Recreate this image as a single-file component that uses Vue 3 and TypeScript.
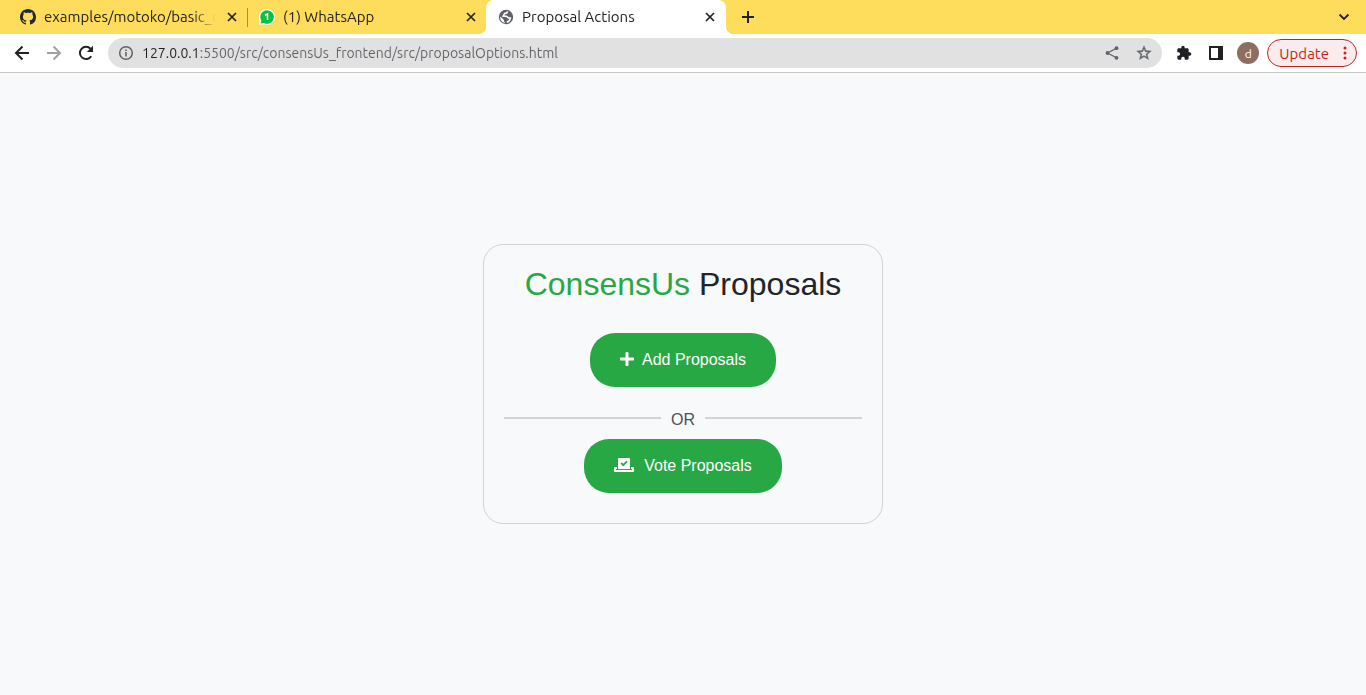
<script setup lang="ts">
import { ref } from 'vue'

interface Tab {
  id: number
  title: string
  icon: 'github' | 'whatsapp' | 'globe'
}

const tabs: Tab[] = [
  { id: 1, title: 'examples/motoko/basic_dao', icon: 'github' },
  { id: 2, title: '(1) WhatsApp', icon: 'whatsapp' },
  { id: 3, title: 'Proposal Actions', icon: 'globe' },
]
const activeTab = ref(3)
const address = ref('127.0.0.1:5500/src/consensUs_frontend/src/proposalOptions.html')
</script>

<template>
  <div class="browser">
    <header class="chrome">
      <div class="tab-strip">
        <div v-for="tab in tabs" :key="tab.id" class="tab" :class="{ active: tab.id === activeTab }">
          <button type="button" class="tab-select" @click="activeTab = tab.id">
            <svg v-if="tab.icon === 'github'" class="favicon" viewBox="0 0 16 16" fill="#24292f" aria-hidden="true">
              <path d="M8 0C3.58 0 0 3.58 0 8c0 3.54 2.29 6.53 5.47 7.59.4.07.55-.17.55-.38 0-.19-.01-.82-.01-1.49-2.01.37-2.53-.49-2.69-.94-.09-.23-.48-.94-.82-1.13-.28-.15-.68-.52-.01-.53.63-.01 1.08.58 1.23.82.72 1.21 1.87.87 2.33.66.07-.52.28-.87.51-1.07-1.78-.2-3.64-.89-3.64-3.95 0-.87.31-1.59.82-2.15-.08-.2-.36-1.02.08-2.12 0 0 .67-.21 2.2.82.64-.18 1.32-.27 2-.27s1.36.09 2 .27c1.53-1.04 2.2-.82 2.2-.82.44 1.1.16 1.92.08 2.12.51.56.82 1.27.82 2.15 0 3.07-1.87 3.75-3.65 3.95.29.25.54.73.54 1.48 0 1.07-.01 1.93-.01 2.2 0 .21.15.46.55.38A8.01 8.01 0 0 0 16 8c0-4.42-3.58-8-8-8z" />
            </svg>
            <svg v-else-if="tab.icon === 'whatsapp'" class="favicon" viewBox="0 0 16 16" aria-hidden="true">
              <path d="M8 0a8 8 0 0 1 0 16c-1.3 0-2.500-.3-3.600-.8L0 16l.8-4.300A8 8 0 0 1 8 0z" fill="#fff" />
              <path d="M8 1.200a6.800 6.800 0 1 1-3.300 12.700l-3.200.6.700-3.100A6.800 6.800 0 0 1 8 1.200z" fill="#0bc143" />
              <path d="M6 6.300 8.500 4.800V11" fill="none" stroke="#fff" stroke-width="1.500" />
            </svg>
            <svg v-else class="favicon" viewBox="0 0 16 16" aria-hidden="true">
              <circle cx="8" cy="8" r="7.200" fill="#5f6368" />
              <path d="M9.600 2.300C9.300 4 8 4.400 6.600 4.600 6.300 5.800 5.300 6 5.200 7.200h3.300c1 .2.900 1.500 2 1.700l1.900.1c-.2 2-1.400 3.700-3.600 4.300" fill="none" stroke="#fff" stroke-width="1.600" />
              <path d="M2.200 7.400 5.800 10.800v1.300l1.500 1.800C4 13.600 1.800 10.600 2.200 7.400z" fill="#fff" />
            </svg>
            <span class="tab-title">{{ tab.title }}</span>
          </button>
          <button type="button" class="tab-close" :aria-label="`Close ${tab.title}`">
            <svg viewBox="0 0 16 16" aria-hidden="true"><path d="m4 4 8 8M12 4l-8 8" /></svg>
          </button>
        </div>
        <button type="button" class="new-tab" aria-label="New tab">
          <svg viewBox="0 0 16 16" aria-hidden="true"><path d="M8 2v12M2 8h12" /></svg>
        </button>
        <button type="button" class="tab-search" aria-label="Search tabs">
          <svg viewBox="0 0 16 16" aria-hidden="true"><path d="m3.500 5.500 4.500 4.500 4.500-4.500" /></svg>
        </button>
      </div>

      <div class="toolbar">
        <button type="button" class="tool" aria-label="Back">
          <svg viewBox="0 0 20 20" class="line"><path d="M17 10H4M10.500 3.500 4 10l6.500 6.500" /></svg>
        </button>
        <button type="button" class="tool muted" aria-label="Forward">
          <svg viewBox="0 0 20 20" class="line"><path d="M3 10h13M9.500 3.500 16 10l-6.500 6.500" /></svg>
        </button>
        <button type="button" class="tool" aria-label="Reload">
          <svg viewBox="0 0 20 20"><path class="arc" d="M15.200 13.200A6.100 6.100 0 1 1 14.500 5.800" /><path d="M17 2.800V9h-6.200z" fill="currentColor" /></svg>
        </button>
        <div class="omnibox">
          <svg class="info" viewBox="0 0 16 16" aria-hidden="true">
            <circle cx="8" cy="8" r="6.300" fill="none" stroke="#5f6368" stroke-width="1.500" />
            <path d="M8 7v4.500M8 4.500V6" stroke="#5f6368" stroke-width="1.600" />
          </svg>
          <input v-model="address" class="address" type="text" aria-label="Address" spellcheck="false" />
          <button type="button" class="inner" aria-label="Share">
            <svg viewBox="0 0 16 16"><path d="M12.500 3.200 3.500 8l9 4.800" fill="none" stroke="#5f6368" stroke-width="1.300" /><circle cx="12.500" cy="3.200" r="1.900" /><circle cx="3.500" cy="8" r="1.900" /><circle cx="12.500" cy="12.800" r="1.900" /></svg>
          </button>
          <button type="button" class="inner" aria-label="Bookmark this page">
            <svg viewBox="1 1 22 22"><path stroke="#5f6368" stroke-width=".5" d="m22 9.240-7.190-.62L12 2 9.190 8.630 2 9.240l5.460 4.730L5.820 21 12 17.270 18.180 21l-1.630-7.030L22 9.240zM12 15.400l-3.760 2.270 1-4.280-3.320-2.880 4.380-.38L12 6.100l1.710 4.040 4.380.38-3.320 2.880 1 4.280L12 15.400z" /></svg>
          </button>
        </div>
        <div class="actions">
          <button type="button" class="action" aria-label="Extensions">
            <svg viewBox="0 0 24 24"><path d="M20.500 11H19V7c0-1.100-.9-2-2-2h-4V3.500a2.500 2.500 0 0 0-5 0V5H4c-1.100 0-1.990.9-1.990 2v3.800H3.500a2.700 2.700 0 0 1 0 5.400H2V20c0 1.100.9 2 2 2h3.800v-1.500a2.700 2.700 0 0 1 5.400 0V22H17c1.100 0 2-.9 2-2v-4h1.500a2.500 2.500 0 0 0 0-5z" fill="currentColor" /></svg>
          </button>
          <button type="button" class="action" aria-label="Side panel">
            <svg viewBox="0 0 16 16"><path d="M1 1h14v14H1zM3 3v10h7V3z" fill="currentColor" fill-rule="evenodd" /></svg>
          </button>
          <button type="button" class="avatar" aria-label="Profile">d</button>
          <button type="button" class="update">
            Update
            <svg viewBox="0 0 4 16" aria-hidden="true"><circle cx="2" cy="3" r="1.500" /><circle cx="2" cy="8" r="1.500" /><circle cx="2" cy="13" r="1.500" /></svg>
          </button>
        </div>
      </div>
    </header>

    <main class="page">
      <section class="card">
        <h1 class="title"><span class="brand">ConsensUs</span> Proposals</h1>
        <button type="button" class="choice">
          <svg class="plus" viewBox="0 0 448 512" aria-hidden="true"><path d="M416 208H272V64c0-17.670-14.330-32-32-32h-32c-17.670 0-32 14.330-32 32v144H32c-17.670 0-32 14.330-32 32v32c0 17.670 14.330 32 32 32h144v144c0 17.670 14.330 32 32 32h32c17.670 0 32-14.330 32-32V304h144c17.670 0 32-14.330 32-32v-32c0-17.670-14.330-32-32-32z" /></svg>
          Add Proposals
        </button>
        <div class="divider"><span>OR</span></div>
        <button type="button" class="choice">
          <svg class="vote" viewBox="0 0 640 512" aria-hidden="true"><path d="M608 320h-64v64h22.400c5.300 0 9.600 3.600 9.600 8v16c0 4.400-4.300 8-9.600 8H73.600c-5.300 0-9.600-3.600-9.600-8v-16c0-4.400 4.300-8 9.600-8H96v-64H32c-17.700 0-32 14.300-32 32v96c0 17.700 14.300 32 32 32h576c17.700 0 32-14.300 32-32v-96c0-17.700-14.300-32-32-32zm-96 64V64.300c0-17.900-14.500-32.300-32.300-32.300H160.400C142.500 32 128 46.500 128 64.300V384h384zM211.200 202l25.500-25.300c4.200-4.200 11-4.200 15.200.1l41.300 41.600 95.200-94.400c4.200-4.200 11-4.200 15.200.1l25.300 25.500c4.200 4.200 4.200 11-.1 15.200L300.500 292c-4.200 4.200-11 4.200-15.200-.1l-74.100-74.700c-4.300-4.200-4.200-11 0-15.200z" /></svg>
          Vote Proposals
        </button>
      </section>
    </main>
  </div>
</template>

<style>
body {
  margin: 0;
}
</style>

<style scoped>
* {
  box-sizing: border-box;
}

button {
  display: flex;
  align-items: center;
  justify-content: center;
  margin: 0;
  padding: 0;
  border: 0;
  background: none;
  color: inherit;
  font: inherit;
  cursor: pointer;
}

svg {
  display: block;
  flex: none;
}

.browser {
  display: flex;
  flex-direction: column;
  min-height: 100vh;
  background: #f8f9fa;
}

.chrome {
  border-bottom: 1px solid #c8c8c8;
  background: #fff;
  color: #202124;
  font-family: Ubuntu, "Noto Sans", sans-serif;
  font-size: 15px;
}

.tab-strip {
  display: flex;
  height: 34px;
  padding-left: 8px;
  background: #ffdd5c;
}

.tab {
  position: relative;
  display: flex;
  align-items: center;
  flex: 0 1 239px;
  min-width: 0;
  padding: 0 7px 0 12px;
}

.tab:first-child::after {
  content: "";
  position: absolute;
  top: 8px;
  right: -1px;
  width: 1px;
  height: 19px;
  background: #a58f3b;
}

.tab.active {
  flex-basis: 240px;
  padding-right: 8px;
  border-radius: 8px 8px 0 0;
  background: #fff;
}

.tab.active::before,
.tab.active::after {
  content: "";
  position: absolute;
  bottom: 0;
  width: 8px;
  height: 8px;
}

.tab.active::before {
  right: 100%;
  background: radial-gradient(circle at 0 0, transparent 8px, #fff 8px);
}

.tab.active::after {
  left: 100%;
  background: radial-gradient(circle at 100% 0, transparent 8px, #fff 8px);
}

.tab-select {
  flex: 1;
  min-width: 0;
  height: 100%;
  gap: 8px;
}

.favicon {
  width: 16px;
  height: 16px;
}

.tab-title {
  flex: 1;
  overflow: hidden;
  line-height: 20px;
  text-align: left;
  white-space: nowrap;
  mask-image: linear-gradient(to left, transparent, #000 24px);
}

.tab-close svg {
  width: 16px;
  height: 16px;
  margin-left: 8px;
  stroke: #202124;
  stroke-width: 1.7;
}

.new-tab {
  width: 28px;
  margin-left: 8px;
}

.new-tab svg {
  width: 16px;
  height: 16px;
  stroke: #202124;
  stroke-width: 2;
}

.tab-search {
  width: 28px;
  margin: 0 8px 0 auto;
}

.tab-search svg {
  width: 16px;
  height: 16px;
  fill: none;
  stroke: #202124;
  stroke-width: 1.8;
}

.toolbar {
  display: flex;
  align-items: center;
  height: 38px;
  padding: 0 9px 0 6px;
}

.tool {
  width: 32px;
  height: 28px;
}

.tool svg {
  width: 20px;
  height: 20px;
}

.line,
.arc {
  fill: none;
  stroke: currentColor;
  stroke-width: 2;
}

.muted {
  color: #a0a1a3;
}

.omnibox {
  display: flex;
  align-items: center;
  flex: 1;
  min-width: 0;
  height: 30px;
  margin-left: 6px;
  padding: 0 10px;
  border-radius: 15px;
  background: #e1e1e1;
}

.info {
  width: 16px;
  height: 16px;
}

.address {
  flex: 1;
  min-width: 0;
  height: 24px;
  margin-left: 8px;
  padding: 0;
  border: 0;
  outline: 0;
  background: linear-gradient(to right, #202124 57px, #5f6368 57px);
  background-clip: text;
  color: transparent;
  font: inherit;
  font-size: 14px;
}

.inner {
  width: 16px;
  height: 24px;
  margin-left: 16px;
}

.inner svg {
  width: 16px;
  height: 16px;
  fill: #5f6368;
}

.actions {
  display: flex;
  align-items: center;
  margin-left: 14px;
}

.action {
  width: 16px;
  height: 28px;
  margin-right: 16px;
}

.action svg {
  width: 16px;
  height: 16px;
}

.avatar {
  width: 22px;
  height: 22px;
  margin: 0 8px 0 -3px;
  border-radius: 50%;
  background: #8d6e63;
  color: #fff;
  font-size: 12px;
}

.update {
  gap: 14px;
  height: 28px;
  padding: 0 9px 0 11px;
  border: 1px solid #c5221f;
  border-radius: 14px;
  background: #faecec;
  color: #c5221f;
}

.update svg {
  width: 4px;
  height: 16px;
  fill: #c5221f;
}

.page {
  display: flex;
  align-items: center;
  justify-content: center;
  flex: 1;
  padding: 20px;
  color: #212529;
  font-family: "Liberation Sans", Arial, sans-serif;
  font-size: 16px;
  line-height: 24px;
}

.card {
  display: flex;
  flex-direction: column;
  align-items: center;
  width: 100%;
  max-width: 400px;
  padding: 20px 20px 30px;
  border: 1px solid #ced4da;
  border-radius: 20px;
}

.title {
  margin: 0 0 30px;
  font-size: 32px;
  font-weight: 400;
  line-height: 38px;
}

.brand {
  color: #28a745;
}

.choice {
  gap: 8px;
  height: 54px;
  padding: 0 30px;
  border-radius: 25px;
  background: #28a745;
  color: #fff;
}

.choice svg {
  height: 16px;
  margin-bottom: 2px;
  fill: #fff;
}

.plus {
  width: 14px;
}

.vote {
  width: 20px;
  margin-right: 2px;
}

.divider {
  display: flex;
  align-items: center;
  gap: 10px;
  width: 100%;
  margin: 21px 0 7px;
  color: #495057;
}

.divider::before,
.divider::after {
  content: "";
  flex: 1;
  height: 2px;
  margin-bottom: 4px;
  background: #ced4da;
}
</style>
